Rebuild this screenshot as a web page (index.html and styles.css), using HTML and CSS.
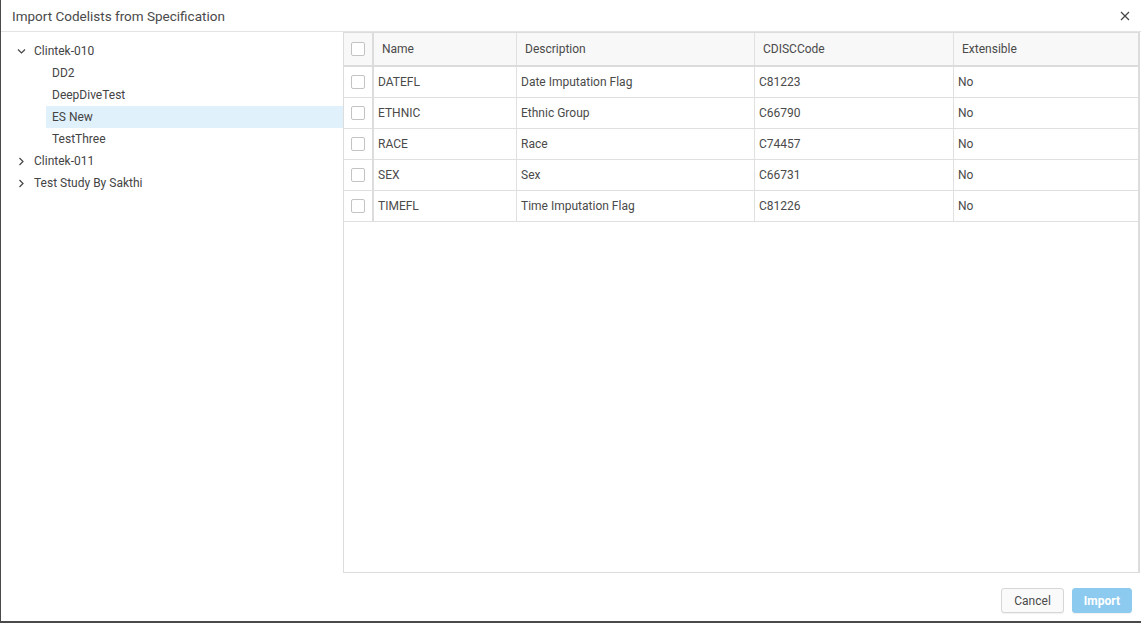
FILE: index.html
```html
<!DOCTYPE html>
<html lang="en">

<head>
    <meta charset="UTF-8">
    <title>Import Codelists from Specification</title>
    <link rel="stylesheet" href="styles.css">
</head>

<body>

    <div class="dialog">
        <div class="dialog-header">
            <span class="dialog-title">Import Codelists from Specification</span>
            <button class="close-btn" title="Close">
                <svg width="10" height="10" viewBox="0 0 10 10">
                    <path d="M1 1 L9 9 M9 1 L1 9" stroke="#444" stroke-width="1.2" fill="none" />
                </svg>
            </button>
        </div>

        <div class="dialog-body">
            <div class="tree">
                <div class="tree-node">
                    <span class="toggle">
                        <svg width="9" height="9" viewBox="0 0 9 9">
                            <path d="M1 2.5 L4.5 6 L8 2.5" stroke="#444" stroke-width="1.2" fill="none" />
                        </svg>
                    </span>
                    <span class="label">Clintek-010</span>
                </div>
                <div class="tree-children">
                    <div class="tree-leaf">DD2</div>
                    <div class="tree-leaf">DeepDiveTest</div>
                    <div class="tree-leaf selected">ES New</div>
                    <div class="tree-leaf">TestThree</div>
                </div>
                <div class="tree-node">
                    <span class="toggle">
                        <svg width="9" height="9" viewBox="0 0 9 9">
                            <path d="M2.5 1 L6 4.5 L2.5 8" stroke="#444" stroke-width="1.2" fill="none" />
                        </svg>
                    </span>
                    <span class="label">Clintek-011</span>
                </div>
                <div class="tree-node">
                    <span class="toggle">
                        <svg width="9" height="9" viewBox="0 0 9 9">
                            <path d="M2.5 1 L6 4.5 L2.5 8" stroke="#444" stroke-width="1.2" fill="none" />
                        </svg>
                    </span>
                    <span class="label">Test Study By Sakthi</span>
                </div>
            </div>

            <div class="grid">
                <table>
                    <thead>
                        <tr>
                            <th class="check-col"><span class="checkbox"></span></th>
                            <th class="name-col">Name</th>
                            <th class="desc-col">Description</th>
                            <th class="code-col">CDISCCode</th>
                            <th>Extensible</th>
                        </tr>
                    </thead>
                    <tbody>
                        <tr>
                            <td class="check-col"><span class="checkbox"></span></td>
                            <td>DATEFL</td>
                            <td>Date Imputation Flag</td>
                            <td>C81223</td>
                            <td>No</td>
                        </tr>
                        <tr>
                            <td class="check-col"><span class="checkbox"></span></td>
                            <td>ETHNIC</td>
                            <td>Ethnic Group</td>
                            <td>C66790</td>
                            <td>No</td>
                        </tr>
                        <tr>
                            <td class="check-col"><span class="checkbox"></span></td>
                            <td>RACE</td>
                            <td>Race</td>
                            <td>C74457</td>
                            <td>No</td>
                        </tr>
                        <tr>
                            <td class="check-col"><span class="checkbox"></span></td>
                            <td>SEX</td>
                            <td>Sex</td>
                            <td>C66731</td>
                            <td>No</td>
                        </tr>
                        <tr>
                            <td class="check-col"><span class="checkbox"></span></td>
                            <td>TIMEFL</td>
                            <td>Time Imputation Flag</td>
                            <td>C81226</td>
                            <td>No</td>
                        </tr>
                    </tbody>
                </table>
            </div>
        </div>

        <div class="dialog-footer">
            <button class="btn">Cancel</button>
            <button class="btn btn-primary">Import</button>
        </div>
    </div>

</body>

</html>
```

FILE: styles.css
```css
body {
    margin: 0;
    background-color: #4a4a4a;
    font-family: Roboto, "Liberation Sans", Arial, sans-serif;
    font-size: 12px;
    color: #444;
    height: 623px;
    overflow: hidden;
}

.dialog {
    margin-left: 1px;
    width: 1140px;
    height: 621px;
    background-color: #fff;
    display: flex;
    flex-direction: column;
}

.dialog-header {
    height: 31px;
    border-bottom: 1px solid #e3e3e3;
    display: flex;
    align-items: center;
    justify-content: space-between;
    padding: 0 6px 0 11px;
}

.dialog-title {
    font-size: 13.5px;
    color: #4a4a4a;
}

.close-btn {
    border: none;
    background: none;
    padding: 0;
    width: 20px;
    height: 20px;
    display: flex;
    align-items: center;
    justify-content: center;
    cursor: pointer;
}

.dialog-body {
    display: flex;
    height: 541px;
}

.tree {
    width: 342px;
    padding-top: 8px;
}

.tree-node {
    height: 22px;
    display: flex;
    align-items: center;
    padding-left: 16px;
}

.toggle {
    width: 17px;
    display: flex;
    align-items: center;
}

.tree-children {
    padding-left: 45px;
}

.tree-leaf {
    height: 22px;
    line-height: 22px;
    padding-left: 6px;
}

.tree-leaf.selected {
    background-color: #e0f1fc;
}

.grid {
    flex: 1;
    border: 1px solid #dcdcdc;
    border-right-width: 2px;
    margin-right: 1px;
}

table {
    border-collapse: collapse;
    width: 100%;
    color: #4a4a4a;
}

th {
    height: 32px;
    background-color: #f8f8f8;
    font-weight: normal;
    text-align: left;
    padding: 0 8px;
    border-right: 1px solid #e0e0e0;
    border-bottom: 2px solid #dcdcdc;
}

th:last-child,
td:last-child {
    border-right: none;
}

td {
    height: 30px;
    padding: 0 4px;
    border-right: 1px solid #e0e0e0;
    border-bottom: 1px solid #e0e0e0;
}

.check-col {
    width: 28px;
    padding: 0;
    text-align: center;
    border-right: 2px solid #dcdcdc;
}

.name-col {
    width: 126px;
}

.desc-col {
    width: 221px;
}

.code-col {
    width: 182px;
}

.checkbox {
    display: inline-block;
    width: 12px;
    height: 12px;
    border: 1px solid #c3c3c3;
    border-radius: 2px;
    background-color: #fff;
    vertical-align: middle;
}

.dialog-footer {
    flex: 1;
    display: flex;
    justify-content: flex-end;
    align-items: center;
    gap: 8px;
    padding: 7px 9px 0 0;
}

.btn {
    height: 25px;
    padding: 0 12px;
    font-family: inherit;
    font-size: 12px;
    color: #4a4a4a;
    background-color: #fafafa;
    border: 1px solid #d6d6d6;
    border-radius: 3px;
    box-shadow: 0 1px 1px rgba(0, 0, 0, 0.06);
    cursor: pointer;
}

.btn-primary {
    background-color: #8ccbef;
    border-color: #8ccbef;
    color: #fff;
    font-weight: bold;
    padding: 0 11px;
}
```
